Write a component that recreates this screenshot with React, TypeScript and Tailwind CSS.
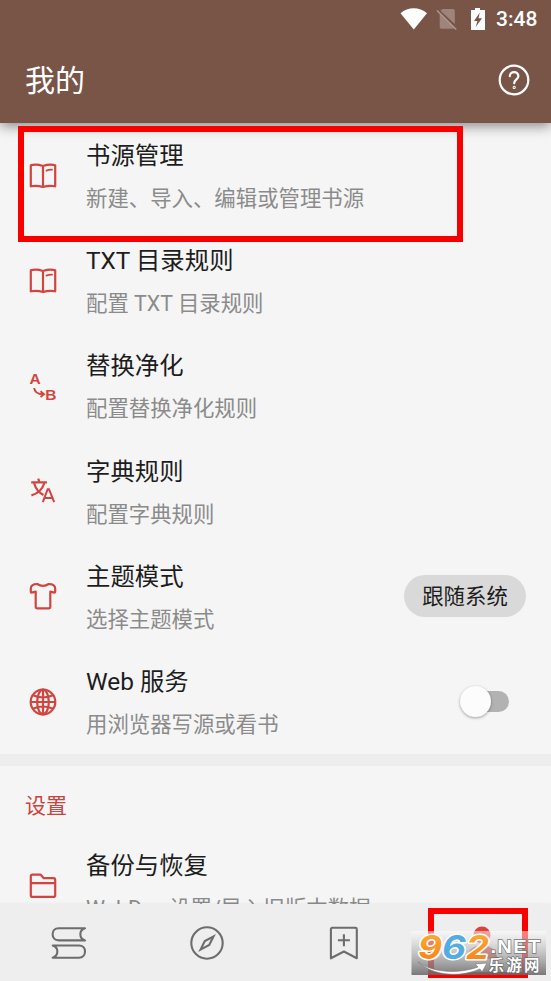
import type { ReactNode } from "react";

const BookIcon = () => (
    <svg width="28" height="28" viewBox="0 0 28 28" fill="none" stroke="currentColor" strokeWidth="2.200" strokeLinejoin="round" strokeLinecap="round">
        <path d="M1.800 3.200Q7.500 1.800 14 4Q20.500 1.800 26.200 3.200V24.300Q20.500 23 14 25Q7.500 23 1.800 24.300ZM14 4V25" />
        <path d="M17.500 8.600Q19.800 7.600 23 7.700" strokeWidth="1.800" />
    </svg>
);

const ReplaceIcon = () => (
    <svg className="overflow-visible" width="28" height="28" viewBox="0 0 28 28" fill="currentColor">
        <g fontFamily="Liberation Sans, sans-serif" fontSize="15.500" fontWeight="700">
            <text x="0.600" y="12">A</text>
            <text x="16.200" y="27.500">B</text>
        </g>
        <path d="M5.200 16C5.700 20.200 9 22.200 14 22.200M11.500 19.300L15 22.200L11.500 25" fill="none" stroke="currentColor" strokeWidth="2" />
    </svg>
);

const TranslateIcon = () => (
    <svg width="28" height="28" viewBox="0 0 28 28" fill="none" stroke="currentColor" strokeWidth="2.200">
        <path d="M2.200 5.300H18M9.200 1.700L10.500 5.300M5.200 6.500C7 12.500 9.500 15.500 14.500 18M15.200 6.500C13.300 12.500 9 16.500 2.400 18.400" />
        <path d="M13.800 25.200L18.700 12.200H20L25.200 25.200M15.500 20.900H23.300" strokeWidth="2" />
    </svg>
);

const ShirtIcon = () => (
    <svg width="28" height="28" viewBox="0 0 28 28" fill="none" stroke="currentColor" strokeWidth="2.200" strokeLinejoin="round">
        <path d="M8.300 2Q11 3.900 14 3.900Q17 3.900 19.700 2C23 2 26.200 3 26.200 6.600V9.700Q26.200 10.600 25.400 10.600L21.300 9.600V24.700Q21.300 26.300 19.600 26.300H8.400Q6.700 26.300 6.700 24.700V9.600L2.600 10.600Q1.800 10.600 1.800 9.700V6.600C1.800 3 5 2 8.300 2Z" />
    </svg>
);

const GlobeIcon = () => (
    <svg width="28" height="28" viewBox="0 0 28 28" fill="none" stroke="currentColor" strokeWidth="2.200">
        <circle cx="14" cy="14" r="12.300" />
        <ellipse cx="14" cy="14" rx="5.800" ry="12.300" />
        <path d="M14 1.600V26.400M1.600 14H26.400M4 7.300Q14 11.700 24 7.300M4 20.700Q14 16.300 24 20.700" />
    </svg>
);

const FolderIcon = () => (
    <svg width="28" height="28" viewBox="0 0 28 28" fill="none" stroke="currentColor" strokeWidth="2.200" strokeLinejoin="round">
        <path d="M3.500 2.600H11.500L14.700 6.200H24.500Q26.200 6.200 26.200 7.900V23.200Q26.200 24.900 24.500 24.900H3.500Q1.800 24.900 1.800 23.200V4.300Q1.800 2.600 3.500 2.600ZM1.800 11.200H26.200" />
    </svg>
);

const ShelfIcon = () => (
    <svg width="36" height="34" viewBox="0 0 36 34" fill="none" stroke="currentColor" strokeWidth="2.100" strokeLinejoin="round" strokeLinecap="round">
        <path d="M34 2.300H7.700C3.700 2.300 1.600 5 1.600 8.300S3.700 14.400 7.700 14.400H34C27.800 12.300 27.800 4.300 34 2.300Z" />
        <path d="M1.700 19.500H28C32 19.500 34 22.200 34 25.500S32 31.700 28 31.700H1.700C7.900 29.500 7.900 21.500 1.700 19.500Z" />
    </svg>
);

const CompassIcon = () => (
    <svg width="34" height="34" viewBox="0 0 34 34" fill="none" stroke="currentColor" strokeWidth="2.100">
        <circle cx="17" cy="17" r="15.700" />
        <path d="M23.500 10.500L19.200 19L10.600 23.600L14.800 15Z" />
    </svg>
);

const BookmarkIcon = () => (
    <svg width="30" height="34" viewBox="0 0 30 34" fill="none" stroke="currentColor" strokeWidth="2.100" strokeLinejoin="round">
        <path d="M1.900 32.300V3.200Q1.900 1.800 3.300 1.800H26.400Q27.800 1.800 27.800 3.200V32.300L14.900 25.500ZM14.900 8.200V20.200M8.900 14.200H20.900" />
    </svg>
);

const PersonIcon = () => (
    <svg width="34" height="34" viewBox="0 0 34 34" fill="currentColor">
        <circle cx="17" cy="9" r="8.500" />
        <path d="M2 33C2 24 8 19.500 17 19.500S32 24 32 33Z" />
    </svg>
);

const StatusIcons = () => (
    <svg width="90" height="24" viewBox="0 0 90 24" fill="white">
        <path d="M.500 6.200C8-.5 19.500-.5 27 6.200L13.800 22.500Z" />
        <path d="M42.500 2H52.800Q54.800 2 54.800 4V17L40.500 3.800ZM39.700 6.500L54.500 20.500Q54 21.800 52.500 21.800H41.500Q39.700 21.800 39.700 20Z" opacity=".28" />
        <path d="M37 3.500L56.200 22.500" stroke="#ad9990" strokeWidth="1.400" />
        <path d="M75 1H80V3H85V23H71V3H75ZM79.800 5.500L74 14H77.500L75.700 20L82 11.200H78.500Z" fillRule="evenodd" />
    </svg>
);

interface ItemProps {
    icon: ReactNode
    title: string
    description: string
    action?: ReactNode
}

const Item = ({ icon, title, description, action }: ItemProps) => (
    <div className="flex h-[105.200px] shrink-0 items-center pl-[29px] pr-[25px]">
        <div className="w-[57px] shrink-0 text-[#d04540]">{icon}</div>
        <div className="flex flex-1 flex-col whitespace-nowrap pt-[4px]">
            <span className="text-[24.400px] leading-[36px] text-[#1d1d1d]">{title}</span>
            <span className="mt-[7px] text-[21.400px] leading-[36px] text-[#8b8b8b]">{description}</span>
        </div>
        {action}
    </div>
);

const items: ItemProps[] = [
    { icon: <BookIcon />, title: "书源管理", description: "新建、导入、编辑或管理书源" },
    { icon: <BookIcon />, title: "TXT 目录规则", description: "配置 TXT 目录规则" },
    { icon: <ReplaceIcon />, title: "替换净化", description: "配置替换净化规则" },
    { icon: <TranslateIcon />, title: "字典规则", description: "配置字典规则" },
    {
        icon: <ShirtIcon />,
        title: "主题模式",
        description: "选择主题模式",
        action: (
            <button className="mb-[1px] h-[42px] w-[122px] rounded-full bg-[#d9d9d9] text-[21.400px] leading-[43px] text-[#1d1d1d]">
                跟随系统
            </button>
        ),
    },
    {
        icon: <GlobeIcon />,
        title: "Web 服务",
        description: "用浏览器写源或看书",
        action: (
            <div className="mb-[1px] mr-[17px] flex h-[21px] w-[47px] items-center rounded-full bg-[#b2b2b2]">
                <div className="-ml-[2px] size-[31px] shrink-0 rounded-full bg-[#fcfcfc] shadow-[0_1px_3px_rgba(0,0,0,0.350)]" />
            </div>
        ),
    },
];

const Watermark = () => (
    <svg width="136" height="45" viewBox="0 0 136 45">
        <defs>
            <linearGradient id="plate" x1="0" y1="0" x2="0" y2="1">
                <stop offset="0" stopColor="#fff" stopOpacity=".5" />
                <stop offset=".45" stopColor="#b5b5b5" stopOpacity=".65" />
                <stop offset="1" stopColor="#686868" stopOpacity=".88" />
            </linearGradient>
            <linearGradient id="orange" x1="0" y1="0" x2="0" y2="1">
                <stop offset="0" stopColor="#ffb03a" />
                <stop offset="1" stopColor="#f47d16" />
            </linearGradient>
        </defs>
        <rect x=".5" y="0" width="134.500" height="44" fill="url(#plate)" />
        <path d="M7 31C22 42 48 43 67 36L64 33L76 32L71 41L69 38C45 48 20 43 7 31Z" fill="white" stroke="#777" strokeWidth=".6" />
        <g fontFamily="Inter, Liberation Sans, sans-serif" fontWeight="700" fontStyle="italic" fontSize="33" stroke="white" strokeWidth="3" paintOrder="stroke" strokeLinejoin="round">
            <text x="7" y="28.300" textLength="24" lengthAdjust="spacingAndGlyphs" fill="url(#orange)">9</text>
            <text x="31" y="28.300" textLength="24" lengthAdjust="spacingAndGlyphs" fill="#54ade2">6</text>
            <text x="55" y="28.300" textLength="23" lengthAdjust="spacingAndGlyphs" fill="url(#orange)">2</text>
        </g>
        <text x="79.500" y="22" textLength="51" lengthAdjust="spacingAndGlyphs" fontFamily="Liberation Sans, sans-serif" fontWeight="700" fontSize="19" letterSpacing="1.200" fill="white" stroke="#777" strokeWidth="1.400" paintOrder="stroke">.NET</text>
        <text x="77.500" y="39.800" textLength="51" fontFamily="Noto Sans CJK SC, sans-serif" fontWeight="700" fontSize="15.500" fill="white" stroke="#666" strokeWidth="1.200" paintOrder="stroke">乐游网</text>
    </svg>
);

export default function App() {
    return (
        <div className="relative flex h-[981px] w-[551px] flex-col overflow-hidden bg-[#f5f5f5] font-[Roboto,'Noto_Sans_CJK_SC',sans-serif]">
            <header className="z-10 h-[123px] shrink-0 bg-[#795548] text-white shadow-[0_3px_12px_rgba(0,0,0,0.450)]">
                <div className="flex h-[37px] items-center justify-end pr-[13px]">
                    <StatusIcons />
                    <span className="ml-[6px] w-[42px] text-[21px] font-medium leading-6">3:48</span>
                </div>
                <div className="flex h-[86px] items-center justify-between pl-[25px] pr-[21px]">
                    <h1 className="pt-[2px] text-[30px] leading-[44px]">我的</h1>
                    <svg width="32" height="32" viewBox="0 0 32 32" fill="none" stroke="white" strokeWidth="2.200" strokeLinecap="round">
                        <circle cx="16" cy="16" r="14.300" />
                        <path d="M11.800 12.200C11.800 6.800 20.400 6.800 20.400 12.200C20.400 15.400 16.200 15.500 16.200 19.300" />
                        <circle cx="16.200" cy="23.400" r=".5" />
                    </svg>
                </div>
            </header>

            <main className="flex min-h-0 flex-1 flex-col overflow-hidden">
                {items.map((item) => (
                    <Item key={item.title} {...item} />
                ))}
                <div className="h-[12px] shrink-0 bg-[#ededed]" />
                <h2 className="h-[67px] shrink-0 pl-[25px] pt-[22px] text-[21px] leading-[36px] text-[#c9433f]">设置</h2>
                <Item icon={<FolderIcon />} title="备份与恢复" description="WebDav 设置/导入旧版本数据" />
            </main>

            <nav className="z-10 grid h-[77px] shrink-0 grid-cols-4 place-items-center bg-[#eeeeee] text-[#6d6d6d] shadow-[0_-1px_2px_rgba(0,0,0,0.040)]">
                <ShelfIcon />
                <CompassIcon />
                <BookmarkIcon />
                <div className="text-[#df403c]"><PersonIcon /></div>
            </nav>

            {/* Highlight frames */}
            <div className="absolute left-[18px] top-[126px] z-20 h-[116px] w-[445px] border-[6px] border-[#f90000]" />
            <div className="absolute left-[428px] top-[908px] z-20 h-[70px] w-[100px] border-[6px] border-[#f90000]" />
            <div className="pointer-events-none absolute left-[411px] top-[931px] z-30">
                <Watermark />
            </div>
        </div>
    );
}
